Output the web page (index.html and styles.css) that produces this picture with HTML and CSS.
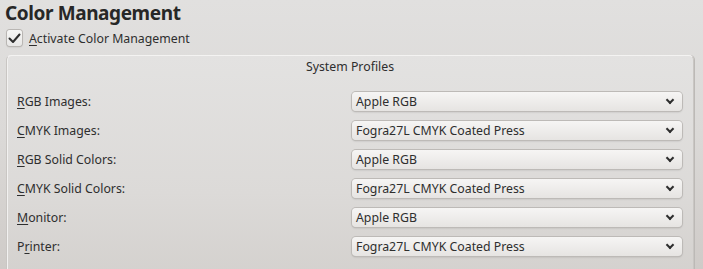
FILE: index.html
```html
<!DOCTYPE html>
<html lang="en">
<head>
    <meta charset="UTF-8">
    <title>Color Management</title>
    <link rel="stylesheet" href="styles.css">
</head>
<body>
    <div class="page">
        <h1 class="title">Color Management</h1>

        <label class="check-row">
            <span class="checkbox">
                <svg width="13" height="11" viewBox="0 0 13 11"><path d="M1.5 5.5 L5 9 L11.5 1.5" fill="none" stroke="#2e2e2e" stroke-width="2" stroke-linecap="round" stroke-linejoin="round"/></svg>
            </span>
            <span><u>A</u>ctivate Color Management</span>
        </label>

        <div class="group">
            <div class="group-title">System Profiles</div>
            <div class="rows">
                <div class="row">
                    <span class="label"><u>R</u>GB Images:</span>
                    <div class="combo"><span>Apple RGB</span><span class="chev"></span></div>
                </div>
                <div class="row">
                    <span class="label"><u>C</u>MYK Images:</span>
                    <div class="combo"><span>Fogra27L CMYK Coated Press</span><span class="chev"></span></div>
                </div>
                <div class="row">
                    <span class="label"><u>R</u>GB Solid Colors:</span>
                    <div class="combo"><span>Apple RGB</span><span class="chev"></span></div>
                </div>
                <div class="row">
                    <span class="label"><u>C</u>MYK Solid Colors:</span>
                    <div class="combo"><span>Fogra27L CMYK Coated Press</span><span class="chev"></span></div>
                </div>
                <div class="row">
                    <span class="label"><u>M</u>onitor:</span>
                    <div class="combo"><span>Apple RGB</span><span class="chev"></span></div>
                </div>
                <div class="row">
                    <span class="label">P<u>r</u>inter:</span>
                    <div class="combo"><span>Fogra27L CMYK Coated Press</span><span class="chev"></span></div>
                </div>
            </div>
        </div>
    </div>
</body>
</html>
```

FILE: styles.css
```css
* {
    margin: 0;
    padding: 0;
    box-sizing: border-box;
}

html, body {
    height: 100%;
}

body {
    font-family: "Noto Sans", "Open Sans", sans-serif;
    font-size: 12.3px;
    color: #2e2e2e;
    background: linear-gradient(180deg, #e1e0df 0%, #dbd9d7 50%, #cfcbc8 100%);
    overflow: hidden;
}

.page {
    padding: 0 9px 0 6px;
}

.title {
    font-size: 19px;
    font-weight: bold;
    letter-spacing: -0.4px;
    line-height: 24px;
    margin-left: -1px;
    padding-top: 1px;
    height: 24px;
    color: #272727;
}

.check-row {
    display: flex;
    align-items: center;
    gap: 7px;
    height: 18px;
    margin-top: 5px;
    margin-left: 1px;
}

.checkbox {
    width: 15px;
    height: 16px;
    border-radius: 3px;
    background: linear-gradient(180deg, #f7f7f6, #e8e7e6);
    box-shadow: 0 0 0 1px #b9b6b3, 0 1px 2px rgba(0, 0, 0, 0.2);
    display: flex;
    align-items: center;
    justify-content: center;
}

.check-row u,
.label u {
    text-decoration-thickness: 1px;
    text-underline-offset: 2px;
}

.group {
    margin-top: 8px;
    height: 230px;
    border-radius: 5px;
    border: 1px solid #c9c6c3;
    border-top-color: #f4f3f2;
    box-shadow: inset 1px 0 0 #f2f1f0, 1px 0 0 #bcb9b6;
    background: linear-gradient(180deg, #e3e2e1 0%, #dcdad8 60%, #d3d0cd 100%);
}

.group-title {
    text-align: center;
    line-height: 22px;
}

.rows {
    display: flex;
    flex-direction: column;
    gap: 10px;
    margin-top: 14px;
    padding: 0 11px 0 10px;
}

.row {
    display: flex;
    align-items: center;
    justify-content: space-between;
    height: 19px;
}

.combo {
    width: 330px;
    height: 19px;
    display: flex;
    align-items: center;
    justify-content: space-between;
    padding: 0 9px 0 4px;
    border-radius: 4px;
    background: linear-gradient(180deg, #f6f5f4, #e6e4e2);
    box-shadow: 0 0 0 1px #bdbab7, 0 1px 2px rgba(0, 0, 0, 0.22);
}

.chev {
    width: 6px;
    height: 6px;
    border-right: 2px solid #2e2e2e;
    border-bottom: 2px solid #2e2e2e;
    transform: rotate(45deg);
    margin-top: -3px;
}
```
